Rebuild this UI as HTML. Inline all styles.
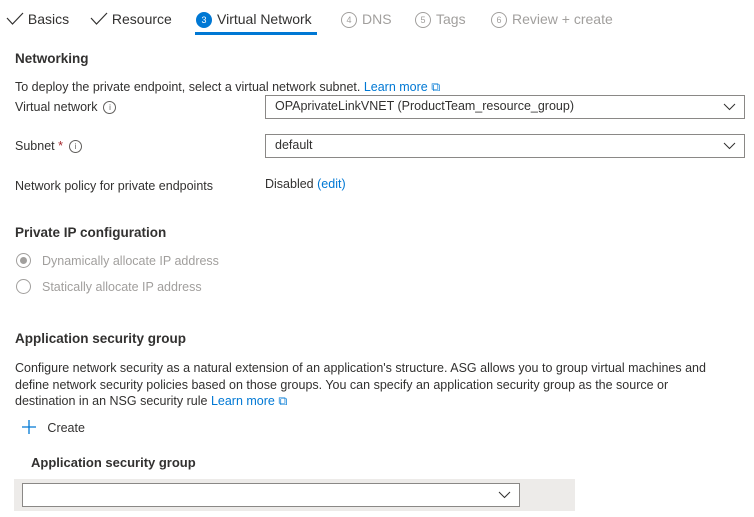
<!DOCTYPE html>
<html><head><style>
body{margin:0;width:754px;height:517px;background:#fff;font-family:"Liberation Sans",sans-serif;font-size:12.5px;color:#323130;position:relative;overflow:hidden}
.a{position:absolute;white-space:nowrap;line-height:16px}
.b{font-weight:bold;font-size:13.5px}
.g{color:#a19f9d}
.l{color:#0078d4}
.t{font-size:14px;top:11px}
.dd{position:absolute;border:1px solid #8a8886;background:#fff;box-sizing:border-box;height:24px}
.dd span{position:absolute;left:9px;top:3px}
.dd svg{position:absolute;right:8px;top:7px}
.ic{display:inline-block;width:11px;height:11px;border:1px solid #605e5c;border-radius:50%;font-size:8px;line-height:11px;text-align:center;vertical-align:middle;margin-left:6px;color:#605e5c}
.num{display:inline-block;width:16px;height:16px;border:1px solid #a19f9d;border-radius:50%;font-size:9px;line-height:14px;text-align:center;vertical-align:middle;margin-right:5px;box-sizing:border-box}
.rad{position:absolute;width:15px;height:15px;border:1px solid #a19f9d;border-radius:50%;box-sizing:border-box}
</style></head><body>
<div class="a t" style="left:6px"><svg width="18" height="13" style="vertical-align:-1px"><path d="M1 6 L6.5 12 L17 1" stroke="#323130" fill="none" stroke-width="1.2"/></svg> Basics</div>
<div class="a t" style="left:90px"><svg width="18" height="13" style="vertical-align:-1px"><path d="M1 6 L6.5 12 L17 1" stroke="#323130" fill="none" stroke-width="1.2"/></svg> Resource</div>
<div class="a t" style="left:196px"><span class="num" style="background:#0078d4;border-color:#0078d4;color:#fff">3</span>Virtual Network</div>
<div style="position:absolute;left:195px;top:32px;width:122px;height:3px;background:#0078d4"></div>
<div class="a g t" style="left:341px"><span class="num">4</span>DNS</div>
<div class="a g t" style="left:415px"><span class="num">5</span>Tags</div>
<div class="a g t" style="left:491px"><span class="num">6</span>Review + create</div>

<div class="a b" style="left:15px;top:51px">Networking</div>
<div class="a" style="left:15px;top:79px">To deploy the private endpoint, select a virtual network subnet. <span class="l">Learn more ⧉</span></div>
<div class="a" style="left:15px;top:99px">Virtual network<span class="ic">i</span></div>
<div class="dd" style="left:265px;top:95px;width:480px"><span>OPAprivateLinkVNET (ProductTeam_resource_group)</span><svg width="13" height="8"><path d="M1 1 L6.5 6.5 L12 1" stroke="#323130" fill="none"/></svg></div>
<div class="a" style="left:15px;top:138px">Subnet <span style="color:#a4262c">*</span><span class="ic">i</span></div>
<div class="dd" style="left:265px;top:134px;width:480px"><span>default</span><svg width="13" height="8"><path d="M1 1 L6.5 6.5 L12 1" stroke="#323130" fill="none"/></svg></div>
<div class="a" style="left:15px;top:178px">Network policy for private endpoints</div>
<div class="a" style="left:265px;top:176px">Disabled <span class="l">(edit)</span></div>

<div class="a b" style="left:15px;top:225px">Private IP configuration</div>
<div class="rad" style="left:16px;top:253px"><div style="position:absolute;left:3px;top:3px;width:7px;height:7px;border-radius:50%;background:#a19f9d"></div></div>
<div class="a g" style="left:42px;top:253px">Dynamically allocate IP address</div>
<div class="rad" style="left:16px;top:279px"></div>
<div class="a g" style="left:42px;top:279px">Statically allocate IP address</div>

<div class="a b" style="left:15px;top:331px">Application security group</div>
<div class="a" style="left:15px;top:360px;line-height:16.5px">Configure network security as a natural extension of an application's structure. ASG allows you to group virtual machines and<br>define network security policies based on those groups. You can specify an application security group as the source or<br>destination in an NSG security rule <span class="l">Learn more ⧉</span></div>
<div class="a" style="left:21px;top:419px"><svg width="16" height="16" style="vertical-align:-3px"><path d="M8 1V15M1 8H15" stroke="#0078d4" stroke-width="1.3"/></svg>&nbsp;&nbsp; Create</div>
<div class="a b" style="left:31px;top:455px;font-size:13px">Application security group</div>
<div style="position:absolute;left:14px;top:479px;width:561px;height:32px;background:#edebe9"></div>
<div class="dd" style="left:22px;top:483px;width:498px;height:24px"><svg width="13" height="8"><path d="M1 1 L6.5 6.5 L12 1" stroke="#323130" fill="none"/></svg></div>
</body></html>
